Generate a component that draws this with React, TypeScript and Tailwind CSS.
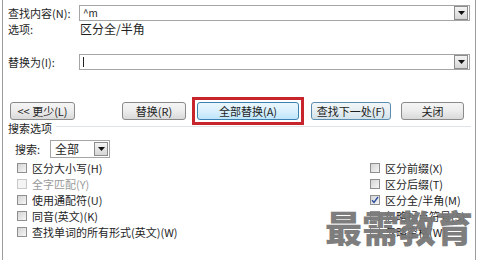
import React from 'react';

const FONT = "font-['Noto_Sans_CJK_SC','Microsoft_YaHei',sans-serif]";

function DropButton() {
  return (
    <div className="w-[14px] h-[14px] border border-[#8c8c8c] bg-gradient-to-b from-[#f4f4f4] to-[#d6d6d6] flex items-center justify-center">
      <svg width="7" height="4" viewBox="0 0 7 4">
        <path d="M0 0h7L3.5 4z" fill="#111" />
      </svg>
    </div>
  );
}

function TextBox({ children }: { children?: React.ReactNode }) {
  return (
    <div className="w-[391px] h-[16px] border border-[#a5a5a5] bg-white flex items-center justify-between pl-[3px] pr-[1px]">
      <div className="text-[10px] leading-none">{children}</div>
      <DropButton />
    </div>
  );
}

function WinButton({ label, width, variant = 'normal' }: { label: string; width: string; variant?: 'normal' | 'hot' | 'default' }) {
  const styles = {
    normal: 'border-[#8a8a8a] from-[#f5f5f5] via-[#ececec] to-[#d9d9d9]',
    hot: 'border-[#3c7fb1] from-[#eaf6fd] via-[#d9f0fc] to-[#bee6fd]',
    default: 'border-[#5a8cb0] from-[#f2f6f8] via-[#e6eef2] to-[#d3e2ea]',
  }[variant];
  return (
    <button className={`${width} h-[18px] shrink-0 rounded-[3px] border bg-gradient-to-b ${styles} text-[11px] leading-none text-[#1e1e1e] flex items-center justify-center`}>
      {label}
    </button>
  );
}

function Check({ label, checked = false, disabled = false }: { label: string; checked?: boolean; disabled?: boolean }) {
  return (
    <div className="h-[16px] flex items-center">
      <div
        className={`w-[10px] h-[10px] border ${disabled ? 'border-[#c8c8c8] bg-[#f4f4f4]' : 'border-[#8e8f8f] bg-gradient-to-br from-[#d4d4d4] to-[#f6f6f6]'} flex items-center justify-center`}
      >
        {checked && (
          <svg width="8" height="8" viewBox="0 0 8 8">
            <path d="M1 4.2l2 2.3L7 1" fill="none" stroke="#2a4fa0" strokeWidth="1.4" />
          </svg>
        )}
      </div>
      <span className={`ml-[5px] text-[11px] leading-none ${disabled ? 'text-[#9a9a9a]' : 'text-[#1e1e1e]'}`}>{label}</span>
    </div>
  );
}

export default function App() {
  return (
    <div className={`w-[479px] h-[271px] bg-white overflow-hidden relative ${FONT} text-[11px] text-[#1e1e1e]`}>
      <div className="ml-[2px] w-[474px] h-[260px] border-x border-[#9c9c9c] pt-[5px]">
        {/* find */}
        <div className="flex items-center h-[16px] pl-[5px]">
          <span className="w-[71px] leading-none">查找内容(N):</span>
          <TextBox>^m</TextBox>
        </div>
        <div className="flex items-center h-[14px] pl-[5px] mt-[1px]">
          <span className="w-[72px] leading-none">选项:</span>
          <span className="leading-none text-[12px]">区分全/半角</span>
        </div>

        {/* replace */}
        <div className="flex items-center h-[16px] pl-[5px] mt-[18px]">
          <span className="w-[71px] leading-none">替换为(I):</span>
          <TextBox>
            <span className="inline-block w-px h-[10px] bg-[#222]" />
          </TextBox>
        </div>

        {/* buttons */}
        <div className="flex items-center h-[18px] mt-[32px]">
          <div className="ml-[7px]">
            <WinButton label="<< 更少(L)" width="w-[65px]" />
          </div>
          <div className="ml-[47px]">
            <WinButton label="替换(R)" width="w-[64px]" />
          </div>
          <div className="ml-[6px] border-[3px] border-[#c8242b] p-[2px] shrink-0">
            <WinButton label="全部替换(A)" width="w-[102px]" variant="hot" />
          </div>
          <div className="ml-[7px]">
            <WinButton label="查找下一处(F)" width="w-[80px]" variant="default" />
          </div>
          <div className="ml-[10px]">
            <WinButton label="关闭" width="w-[63px]" />
          </div>
        </div>

        {/* search options */}
        <div className="flex items-center h-[13px] mt-[2px] pl-[5px] pr-[4px]">
          <span className="leading-none">搜索选项</span>
          <div className="flex-1 h-px bg-[#dfe3e6] ml-[4px] -mt-[4px]" />
        </div>

        <div className="flex items-center h-[18px] mt-[5px] pl-[12px]">
          <span className="w-[35px] leading-none">搜索:</span>
          <div className="w-[60px] h-[18px] border border-[#a5a5a5] flex items-center justify-between pl-[4px] pr-[1px]">
            <span className="leading-none text-[12px]">全部</span>
            <DropButton />
          </div>
        </div>

        <div className="flex mt-[2px] pl-[14px]">
          <div className="w-[353px] flex flex-col">
            <Check label="区分大小写(H)" />
            <Check label="全字匹配(Y)" disabled />
            <Check label="使用通配符(U)" />
            <Check label="同音(英文)(K)" />
            <Check label="查找单词的所有形式(英文)(W)" />
          </div>
          <div className="flex flex-col">
            <Check label="区分前缀(X)" />
            <Check label="区分后缀(T)" />
            <Check label="区分全/半角(M)" checked />
            <Check label="忽略标点符号(S)" />
            <Check label="忽略空格(W)" />
          </div>
        </div>
      </div>

      {/* watermark */}
      <div className="absolute left-[325px] top-[209px] text-[37px] font-black leading-none text-[#787878] opacity-95">
        最需教育
      </div>
    </div>
  );
}
